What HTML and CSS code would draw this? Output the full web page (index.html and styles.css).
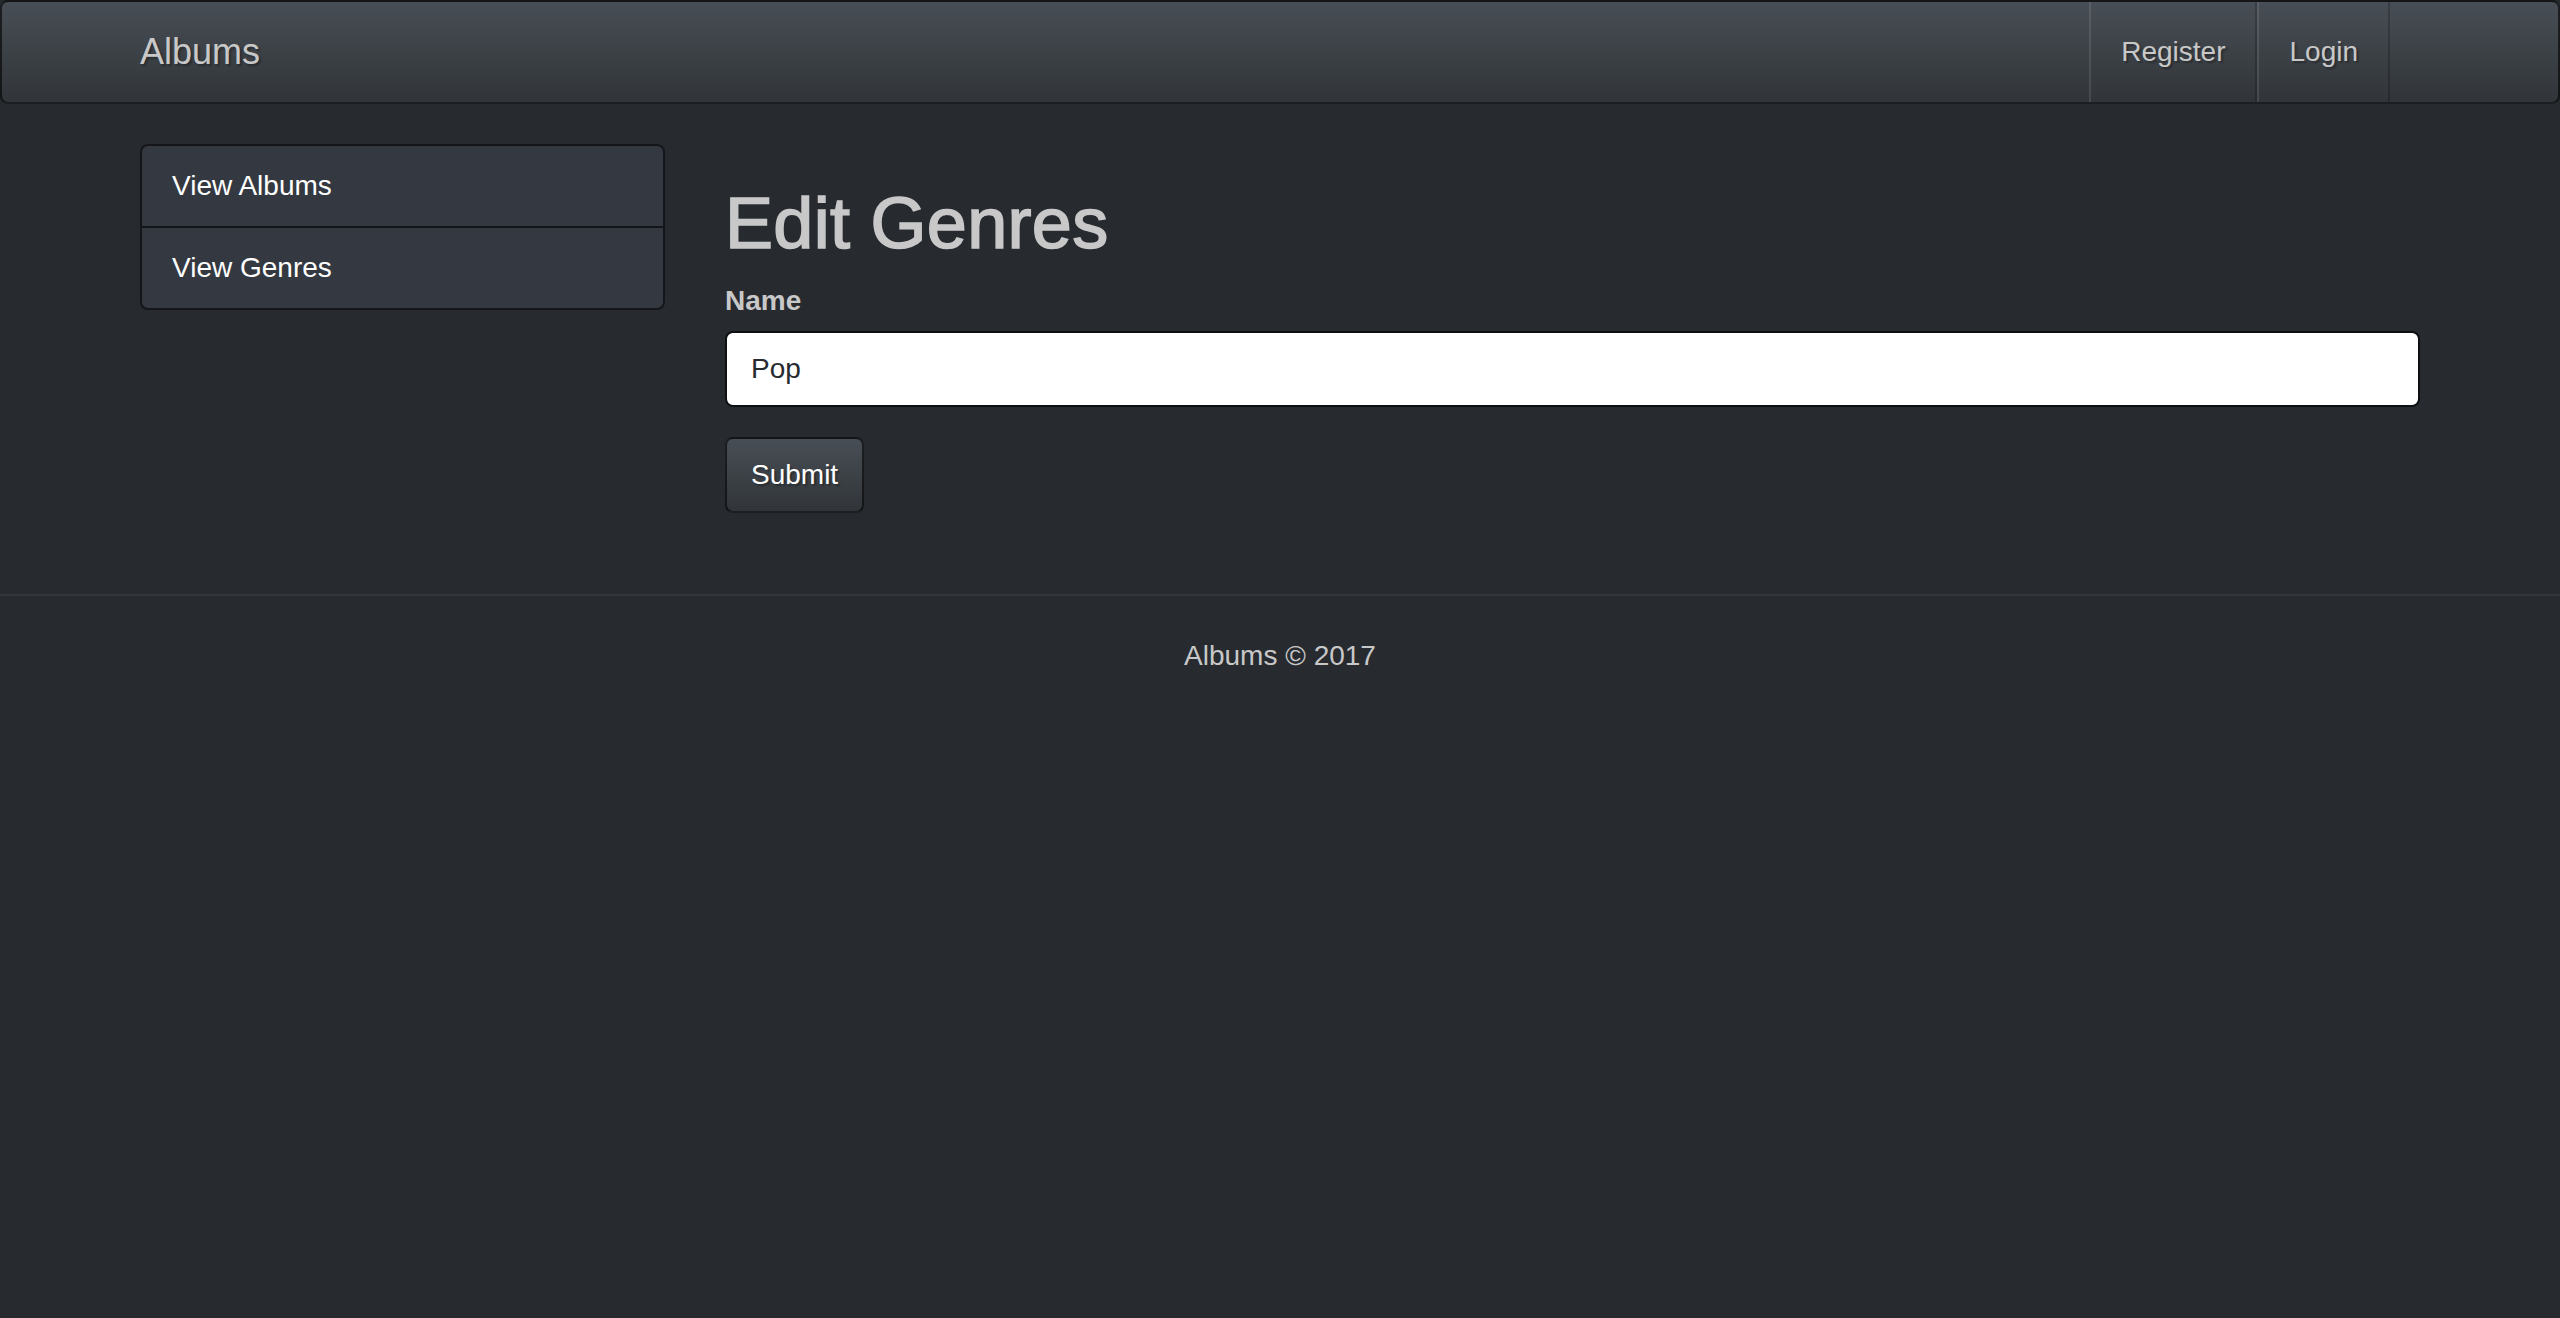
FILE: index.html
```html
<!DOCTYPE html>
<html lang="en">
<head>
<meta charset="utf-8">
<title>Edit Genres - Albums</title>
<link rel="stylesheet" href="styles.css">
</head>
<body>
<nav class="navbar">
  <div class="navbar-inner">
    <a class="brand" href="#">Albums</a>
    <ul class="nav">
      <li><a href="#">Register</a></li>
      <li><a href="#">Login</a></li>
    </ul>
  </div>
</nav>
<div class="container">
  <aside class="sidebar">
    <div class="list-group">
      <a class="list-group-item" href="#">View Albums</a>
      <a class="list-group-item" href="#">View Genres</a>
    </div>
  </aside>
  <main class="main">
    <h1 class="title">Edit Genres</h1>
    <form class="form">
      <div class="form-group">
        <label class="label" for="name">Name</label>
        <input class="form-control" id="name" type="text" value="Pop">
      </div>
      <button class="btn" type="button">Submit</button>
    </form>
  </main>
</div>
<hr class="divider">
<footer class="footer">
  <p>Albums &copy; 2017</p>
</footer>
</body>
</html>
```

FILE: styles.css
```css
* {
  box-sizing: border-box;
}

html, body {
  margin: 0;
  padding: 0;
}

body {
  background: #272b30;
  color: #c8c8c8;
  font-family: "Liberation Sans", Arial, Helvetica, sans-serif;
  font-size: 28px;
  line-height: 40px;
}

a {
  text-decoration: none;
}

.navbar {
  min-height: 104px;
  margin-bottom: 40px;
  border: 2px solid rgba(0, 0, 0, 0.6);
  border-radius: 8px;
  background-image: linear-gradient(#484e55, #3a3f44 60%, #313539);
  text-shadow: 2px 2px 2px rgba(0, 0, 0, 0.3);
}

.navbar-inner {
  width: 2340px;
  margin: 0 auto;
  padding: 0 30px;
  display: flex;
  justify-content: space-between;
  align-items: stretch;
}

.brand {
  display: block;
  padding: 30px 0;
  font-size: 36px;
  line-height: 40px;
  color: #c8c8c8;
}

.nav {
  display: flex;
  list-style: none;
  margin: 0 30px 0 0;
  padding: 0;
}

.nav a {
  display: block;
  padding: 30px;
  line-height: 40px;
  font-size: 28px;
  color: #c8c8c8;
  border-left: 2px solid rgba(255, 255, 255, 0.1);
  border-right: 2px solid rgba(0, 0, 0, 0.2);
}

.container {
  width: 2340px;
  margin: 0 auto;
  padding: 0 30px;
  display: flex;
  align-items: flex-start;
}

.sidebar {
  width: 525px;
  flex: none;
}

.list-group {
  display: flex;
  flex-direction: column;
}

.list-group-item {
  display: block;
  padding: 20px 30px;
  margin-bottom: -2px;
  background: #343840;
  border: 2px solid rgba(0, 0, 0, 0.6);
  color: #fff;
  font-size: 28px;
  line-height: 40px;
}

.list-group-item:first-child {
  border-radius: 8px 8px 0 0;
}

.list-group-item:last-child {
  margin-bottom: 0;
  border-radius: 0 0 8px 8px;
}

.main {
  flex: 1;
  margin-left: 60px;
}

.title {
  margin: 40px 0 18px;
  font-size: 72px;
  line-height: 1.1;
  font-weight: 500;
  letter-spacing: 0.3px;
  color: #c8c8c8;
  -webkit-text-stroke: 1.6px #c8c8c8;
}

.form {
  margin: 0;
}

.form-group {
  margin-bottom: 30px;
}

.label {
  display: inline-block;
  margin-bottom: 10px;
  font-weight: bold;
  color: #c8c8c8;
}

.form-control {
  display: block;
  width: 100%;
  height: 76px;
  padding: 16px 24px;
  font-family: inherit;
  font-size: 28px;
  line-height: 40px;
  color: #272b30;
  background: #fff;
  border: 2px solid #0e0f11;
  border-radius: 8px;
  outline: none;
}

.btn {
  display: inline-block;
  height: 76px;
  padding: 16px 24px;
  font-family: inherit;
  font-size: 28px;
  line-height: 40px;
  color: #fff;
  text-shadow: 2px 2px 2px rgba(0, 0, 0, 0.3);
  background-image: linear-gradient(#484e55, #3a3f44 60%, #313539);
  border: 2px solid rgba(0, 0, 0, 0.6);
  border-radius: 8px;
  cursor: pointer;
}

.divider {
  height: 0;
  margin: 81px 0 40px;
  border: 0;
  border-top: 2px solid #36353a;
}

.footer {
  text-align: center;
  color: #c8c8c8;
}

.footer p {
  margin: 0 0 20px;
}
```
